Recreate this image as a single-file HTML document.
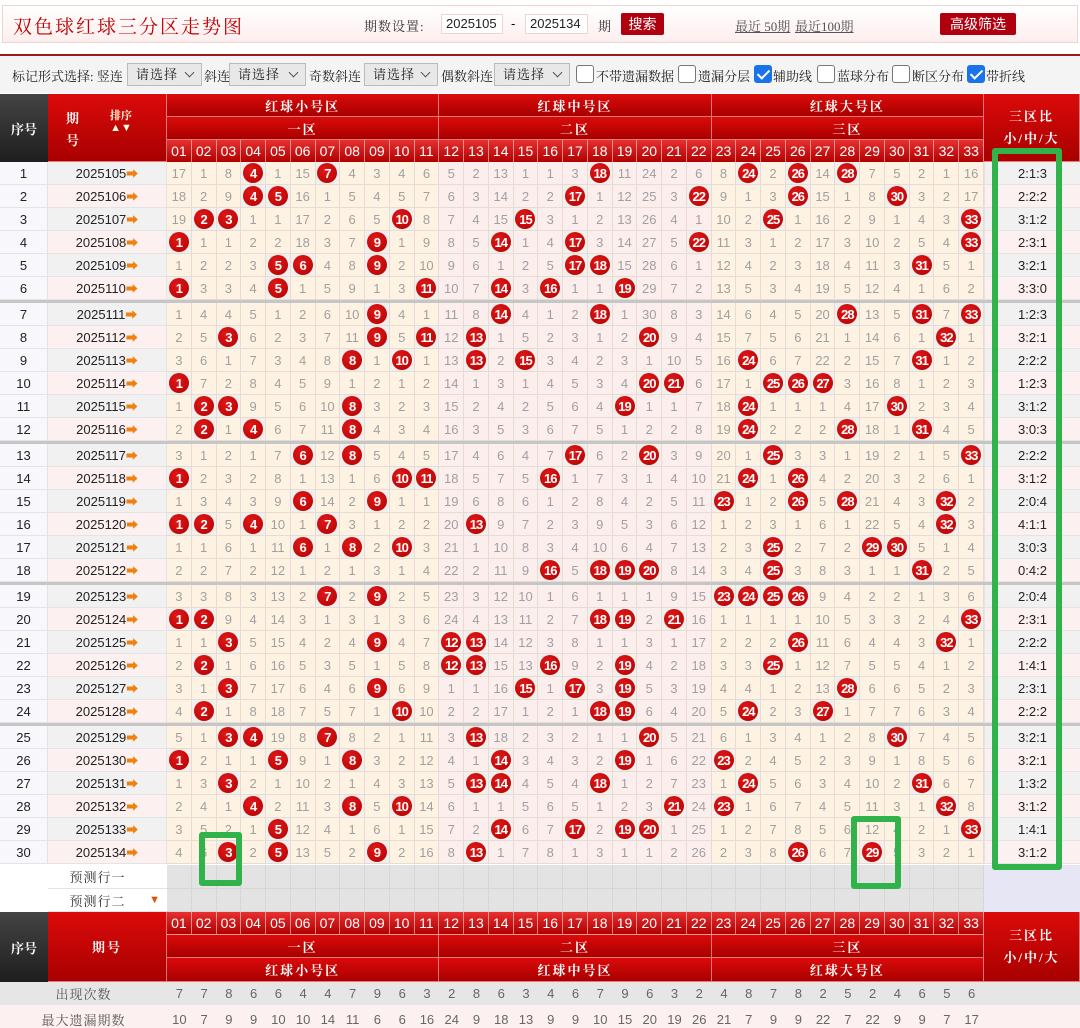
<!DOCTYPE html>
<html><head><meta charset="utf-8">
<style>
*{margin:0;padding:0;box-sizing:border-box}
body{width:1080px;height:1015px;overflow:hidden;background:#fff;font-family:"Liberation Sans","Noto Sans CJK SC",sans-serif;position:relative}
.a{position:absolute}
.c{position:absolute;display:flex;align-items:center;justify-content:center;overflow:hidden;white-space:nowrap}
.serif{font-family:"Liberation Serif","Noto Serif CJK SC",serif}
.hd{background:linear-gradient(#dc0a0a,#a80000);color:#fff;border-right:1px solid rgba(255,255,255,.45);border-bottom:1px solid rgba(255,255,255,.45);font-family:"Liberation Serif","Noto Serif CJK SC",serif;font-size:13px;font-weight:bold;letter-spacing:2px}
.hn{background:linear-gradient(#e83030,#b00000);color:#fff;border-right:1px solid rgba(255,255,255,.5);font-size:14px}
.dk{background:linear-gradient(#444,#1e1e1e);color:#fff;font-family:"Liberation Serif","Noto Serif CJK SC",serif;font-size:13px;font-weight:bold}
.d{color:#a0a0a0;font-size:13px;border-right:1px solid #e6dcd4;border-bottom:1px solid #e6dcd4}
.ball{width:20px;height:20px;border-radius:50%;background:radial-gradient(circle at 40% 35%,#e01818,#b30000);color:#fff;font-size:13px;font-weight:bold;display:flex;align-items:center;justify-content:center;letter-spacing:-1px}
.sel{position:absolute;top:63px;height:23px;border:1px solid #bbb;background:#e8e8e8;font-size:13px;padding-left:8px;line-height:21px;font-family:"Liberation Serif","Noto Serif CJK SC",serif;color:#222;letter-spacing:1px}
.sel:after{content:"";position:absolute;right:8px;top:5px;width:6px;height:6px;border-right:1px solid #555;border-bottom:1px solid #555;transform:rotate(45deg)}
.cb{position:absolute;top:65px;width:18px;height:18px;border:1px solid #777;border-radius:3px;background:#fff}
.cb.on{background:#1a73e8;border-color:#1a73e8}
.cb.on:after{content:"";position:absolute;left:5px;top:1px;width:5px;height:10px;border-right:2px solid #fff;border-bottom:2px solid #fff;transform:rotate(45deg)}
.lb{position:absolute;top:66px;font-size:13px;color:#222;font-family:"Liberation Serif","Noto Serif CJK SC",serif;white-space:nowrap}
.g{position:absolute;border:6px solid #2fb34a;border-radius:3px}
</style></head><body>
<div class="a" style="left:2px;top:5px;width:1076px;height:38px;border:1px solid #efd4d4;background:linear-gradient(#fff,#fdeeee)"></div>
<div class="a serif" style="left:13px;top:12px;font-size:19px;color:#c00000;letter-spacing:2px">双色球红球三分区走势图</div>
<div class="a serif" style="left:364px;top:16px;font-size:13px;color:#333;letter-spacing:1px">期数设置:</div>
<div class="a" style="left:441px;top:14px;width:62px;height:20px;border:1px solid #ecd6d6;background:#fff;font-size:13px;line-height:18px;padding-left:4px;color:#222">2025105</div>
<div class="a" style="left:511px;top:16px;font-size:13px">-</div>
<div class="a" style="left:525px;top:14px;width:63px;height:20px;border:1px solid #ecd6d6;background:#fff;font-size:13px;line-height:18px;padding-left:4px;color:#222">2025134</div>
<div class="a serif" style="left:598px;top:16px;font-size:13px;color:#333">期</div>
<div class="c" style="left:621px;top:13px;width:43px;height:22px;background:#b00010;color:#fff;font-size:14px;border-radius:2px">搜索</div>
<div class="a serif" style="left:735px;top:16px;font-size:13px;color:#555;text-decoration:underline">最近 50期</div>
<div class="a serif" style="left:795px;top:16px;font-size:13px;color:#555;text-decoration:underline">最近100期</div>
<div class="c" style="left:940px;top:13px;width:76px;height:22px;background:#b00010;color:#fff;font-size:14px;border-radius:2px">高级筛选</div>
<div class="a" style="left:0;top:54px;width:1080px;height:2px;background:#9c1a1a"></div>
<div class="a" style="left:0;top:56px;width:1080px;height:37px;background:#f4f4f4"></div>
<div class="lb" style="left:12px">标记形式选择: 竖连</div>
<div class="sel" style="left:127px;width:75px">请选择</div>
<div class="lb" style="left:204px">斜连</div>
<div class="sel" style="left:229px;width:77px">请选择</div>
<div class="lb" style="left:309px">奇数斜连</div>
<div class="sel" style="left:364px;width:74px">请选择</div>
<div class="lb" style="left:441px">偶数斜连</div>
<div class="sel" style="left:494px;width:76px">请选择</div>
<div class="cb" style="left:576px"></div><div class="lb" style="left:596px">不带遗漏数据</div>
<div class="cb" style="left:678px"></div><div class="lb" style="left:698px">遗漏分层</div>
<div class="cb on" style="left:754px"></div><div class="lb" style="left:773px">辅助线</div>
<div class="cb" style="left:817px"></div><div class="lb" style="left:837px">蓝球分布</div>
<div class="cb" style="left:892px"></div><div class="lb" style="left:912px">断区分布</div>
<div class="cb on" style="left:967px"></div><div class="lb" style="left:986px">带折线</div>
<div id="t"></div>
<script>
var X0=167,CW=(984-167)/33,H='';
function C(x,y,w,h,cls,st,html){H+='<div class="c '+cls+'" style="left:'+x+'px;top:'+y+'px;width:'+w+'px;height:'+h+'px;'+st+'">'+html+'</div>';}
function p(n){return (n<10?'0':'')+n}
function cx(i){return X0+i*CW}
C(0,94,48,68,'dk','','序号');
C(48,94,119,68,'hd','','<div style="position:absolute;left:18px;top:14px;line-height:22px;font-size:13px">期<br>号</div><div style="position:absolute;left:62px;top:16px;font-size:11px;color:#ffd;line-height:12px;text-align:center;letter-spacing:0">排序<br>▲▼</div>');
var zn=['红球小号区','红球中号区','红球大号区'],zz=['一区','二区','三区'];
for(var z=0;z<3;z++){var x=cx(z*11),w=CW*11;C(x,94,w,23,'hd','',zn[z]);C(x,117,w,23,'hd','',zz[z]);}
for(var i=0;i<33;i++)C(cx(i),140,CW,22,'hn','',p(i+1));
C(984,94,96,68,'hd','line-height:22px;flex-direction:column','<div>三区比</div><div>小/中/大</div>');
var W=[[4,7,18,24,26,28],[4,5,17,22,26,30],[2,3,10,15,25,33],[1,9,14,17,22,33],[5,6,9,17,18,31],[1,5,11,14,16,19],[9,14,18,28,31,33],[3,9,11,13,20,32],[8,10,13,15,24,31],[1,20,21,25,26,27],[2,3,8,19,24,30],[2,4,8,24,28,31],[6,8,17,20,25,33],[1,10,11,16,24,26],[6,9,23,26,28,32],[1,2,4,7,13,32],[6,8,10,25,29,30],[16,18,19,20,25,31],[7,9,23,24,25,26],[1,2,18,19,21,33],[3,9,12,13,26,32],[2,12,13,16,19,25],[3,9,15,17,19,28],[2,10,18,19,24,27],[3,4,7,13,20,30],[1,5,8,14,19,23],[3,13,14,18,24,31],[4,8,10,21,23,32],[5,14,17,19,20,33],[3,5,9,13,26,29]];
var first=[17,1,8,0,1,15,0,4,3,4,6,5,2,13,1,1,3,0,11,24,2,6,8,0,2,0,14,0,7,5,2,1,16];
var om=first.map(function(v){return v-1});
for(var r=0;r<30;r++){
 var y=162+r*23+Math.floor(r/6)*3,ev=r%2==1;
 C(0,y,48,23,'','background:#f7f7fc;border-right:1px solid #e4e4e4;border-bottom:1px solid #e4e4e4;font-size:13px;color:#222',''+(r+1));
 C(48,y,119,23,'','background:'+(ev?'#fdf0f0':'#f1f1f1')+';border-right:1px solid #e4e4e4;border-bottom:1px solid #e4e4e4;font-size:13px;color:#222','2025'+(105+r)+'<span style="color:#f08010;font-weight:bold;font-size:12px">➡</span>');
 var cnt=[0,0,0];
 for(var i=0;i<33;i++){
  var n=i+1,hit=W[r].indexOf(n)>=0,zc=Math.floor(i/11);
  var bg=zc==1?'#fdeeee':'#fef3e2';
  if(hit){om[i]=0;cnt[zc]++;C(cx(i),y,CW,23,'d','background:#f3efec','<div class="ball">'+n+'</div>');}
  else{om[i]++;C(cx(i),y,CW,23,'d','background:'+bg,''+om[i]);}
 }
 C(984,y,96,23,'','background:'+(ev?'#fdf0f0':'#f1f1f1')+';border-bottom:1px solid #e4e4e4;border-left:1px solid #e4e4e4;font-size:13px;color:#222',cnt.join(':'));
}
for(var k=1;k<=4;k++){var y=162+6*k*23+(k-1)*3;H+='<div class="a" style="left:0;top:'+y+'px;width:1080px;height:3px;background:#c6c6c6"></div>';}
var pr=[[865,24,'预测行一',''],[889,23,'预测行二','<span style="position:absolute;right:6px;color:#e05010;font-size:11px">▼</span>']];
pr.forEach(function(q){
 C(0,q[0],48,q[1],'','background:#fff','');
 C(48,q[0],119,q[1],'','background:#fff;border-bottom:1px solid #e4e4e4;font-size:13px;color:#333;padding-right:20px;letter-spacing:1px;font-family:Liberation Serif,Noto Serif CJK SC,serif',q[2]+q[3]);
 for(var i=0;i<33;i++)C(cx(i),q[0],CW,q[1],'','background:#e3e3e3;border-right:1px solid #d6d6d6;border-bottom:1px solid #d6d6d6','');
 C(984,q[0],96,q[1],'','background:#e6e6f4','');
});
C(0,912,48,70,'dk','','序号');
C(48,912,119,70,'hd','','期号');
for(var i=0;i<33;i++)C(cx(i),912,CW,23,'hn','border-bottom:1px solid rgba(255,255,255,.5)',p(i+1));
for(var z=0;z<3;z++){var x=cx(z*11),w=CW*11;C(x,935,w,23,'hd','',zz[z]);C(x,958,w,24,'hd','',zn[z]);}
C(984,912,96,70,'hd','line-height:22px;flex-direction:column','<div>三区比</div><div>小/中/大</div>');
var s1=[7,7,8,6,6,4,4,7,9,6,3,2,8,6,3,4,6,7,9,6,3,2,4,8,7,8,2,5,2,4,6,5,6];
var s2=[10,7,9,9,10,10,14,11,6,6,16,24,9,18,13,9,9,10,15,20,19,26,21,7,9,9,22,7,22,9,9,7,17];
C(0,982,167,23,'','background:#e6e6e6;font-size:13px;color:#555;letter-spacing:1px;font-family:Liberation Serif,Noto Serif CJK SC,serif','出现次数');
C(0,1005,167,23,'','background:#fdf0f0;font-size:13px;color:#555;letter-spacing:1px;padding-top:6px;font-family:Liberation Serif,Noto Serif CJK SC,serif','最大遗漏期数');
for(var i=0;i<33;i++){C(cx(i),982,CW,23,'','background:#e6e6e6;font-size:13px;color:#666',''+s1[i]);C(cx(i),1005,CW,23,'','background:#fdf0f0;font-size:13px;color:#666;padding-top:6px',''+s2[i]);}
C(984,982,96,23,'','background:#e6e6e6','');C(984,1005,96,23,'','background:#fdf0f0','');
H+='<div class="g" style="left:199px;top:832px;width:43px;height:54px"></div>';
H+='<div class="g" style="left:851px;top:816px;width:50px;height:73px"></div>';
H+='<div class="g" style="left:992px;top:148px;width:70px;height:722px"></div>';
document.getElementById('t').innerHTML=H;
</script>
</body></html>
